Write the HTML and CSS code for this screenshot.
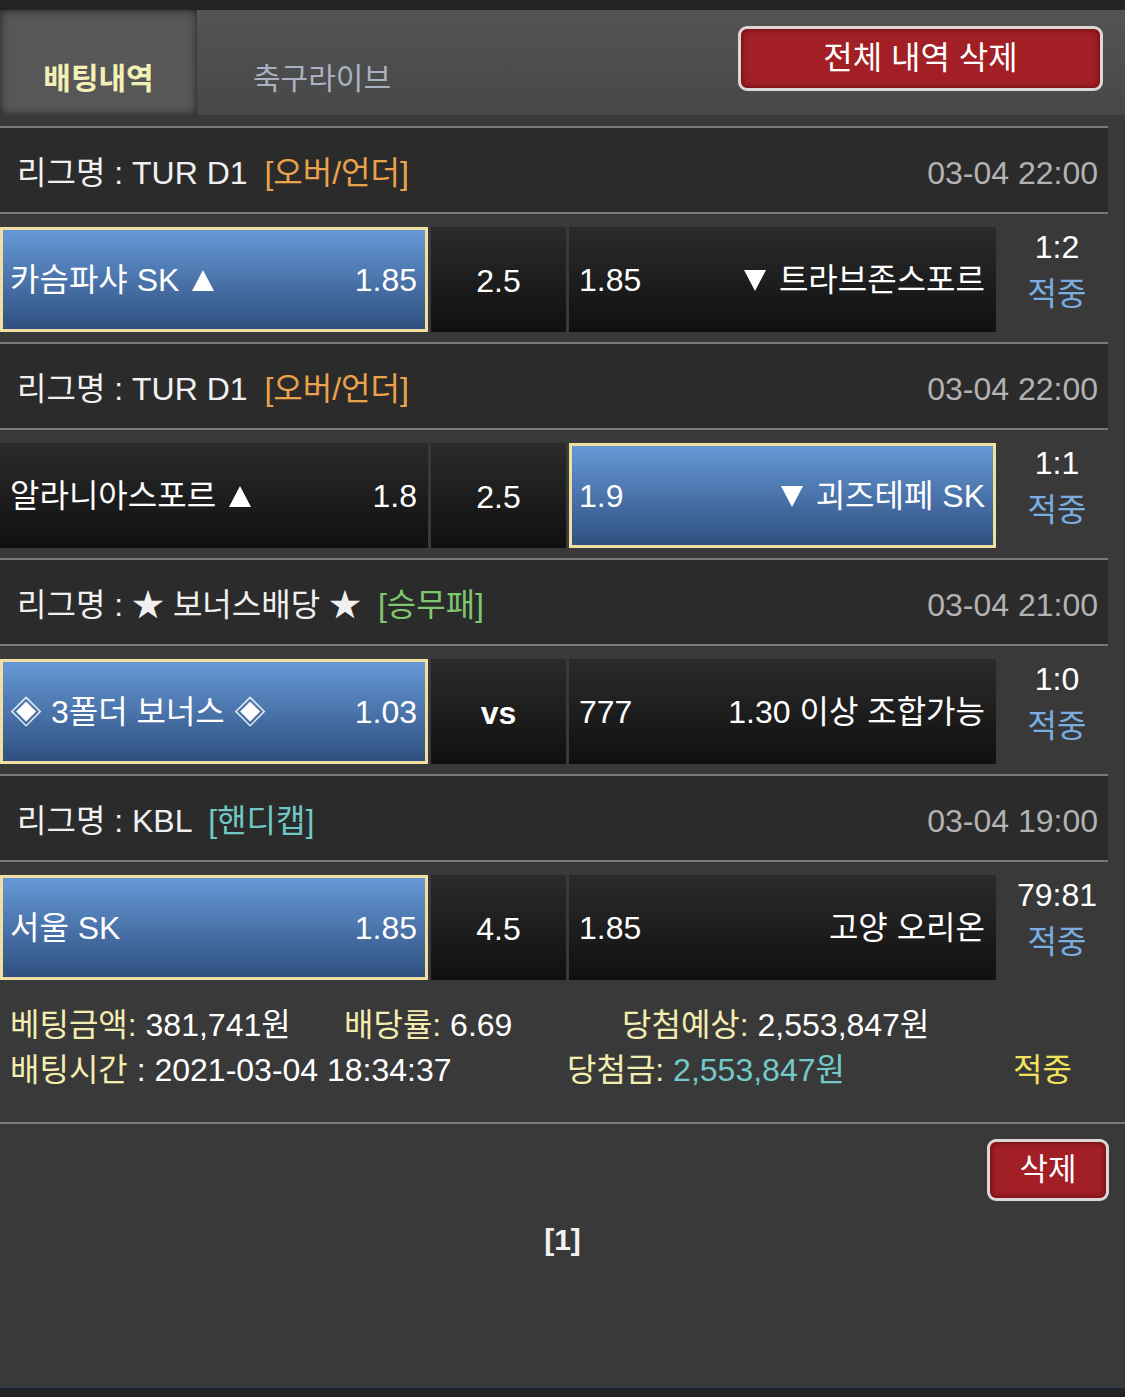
FILE: index.html
```html
<!DOCTYPE html>
<html lang="ko">
<head>
<meta charset="utf-8">
<title>배팅내역</title>
<link rel="stylesheet" href="styles.css">
</head>
<body>
<div class="topbar"></div>
<div class="tabs">
  <div class="tab tab-active">배팅내역</div>
  <div class="tab tab-live">축구라이브</div>
  <button class="btn btn-all">전체 내역 삭제</button>
</div>

<div class="list">
  <div class="block">
    <div class="league">
      <div class="league-name">리그명 : TUR D1 <span class="tag tag-ou">[오버/언더]</span></div>
      <div class="league-date">03-04 22:00</div>
    </div>
    <div class="row">
      <div class="cell cell-home sel"><span>카슴파샤 SK <svg class="tri tri-up" viewBox="0 0 22 21"><path d="M11 0L22 21H0z"/></svg></span><span>1.85</span></div>
      <div class="cell cell-mid">2.5</div>
      <div class="cell cell-away"><span>1.85</span><span><svg class="tri tri-down" viewBox="0 0 22 21"><path d="M0 0H22L11 21z"/></svg> 트라브존스포르</span></div>
      <div class="score"><div class="score-val">1:2</div><div class="score-res">적중</div></div>
    </div>
  </div>

  <div class="block">
    <div class="league">
      <div class="league-name">리그명 : TUR D1 <span class="tag tag-ou">[오버/언더]</span></div>
      <div class="league-date">03-04 22:00</div>
    </div>
    <div class="row">
      <div class="cell cell-home"><span>알라니아스포르 <svg class="tri tri-up" viewBox="0 0 22 21"><path d="M11 0L22 21H0z"/></svg></span><span>1.8</span></div>
      <div class="cell cell-mid">2.5</div>
      <div class="cell cell-away sel"><span>1.9</span><span><svg class="tri tri-down" viewBox="0 0 22 21"><path d="M0 0H22L11 21z"/></svg> 괴즈테페 SK</span></div>
      <div class="score"><div class="score-val">1:1</div><div class="score-res">적중</div></div>
    </div>
  </div>

  <div class="block">
    <div class="league">
      <div class="league-name">리그명 : ★ 보너스배당 ★ <span class="tag tag-wdl">[승무패]</span></div>
      <div class="league-date">03-04 21:00</div>
    </div>
    <div class="row">
      <div class="cell cell-home sel"><span>◈ 3폴더 보너스 ◈</span><span>1.03</span></div>
      <div class="cell cell-mid vs">vs</div>
      <div class="cell cell-away"><span>777</span><span>1.30 이상 조합가능</span></div>
      <div class="score"><div class="score-val">1:0</div><div class="score-res">적중</div></div>
    </div>
  </div>

  <div class="block">
    <div class="league">
      <div class="league-name">리그명 : KBL <span class="tag tag-hc">[핸디캡]</span></div>
      <div class="league-date">03-04 19:00</div>
    </div>
    <div class="row">
      <div class="cell cell-home sel"><span>서울 SK</span><span>1.85</span></div>
      <div class="cell cell-mid">4.5</div>
      <div class="cell cell-away"><span>1.85</span><span>고양 오리온</span></div>
      <div class="score"><div class="score-val">79:81</div><div class="score-res">적중</div></div>
    </div>
  </div>
</div>

<div class="summary">
  <div class="sum-line">
    <div class="sum-a"><span class="lbl">베팅금액:</span> 381,741원</div>
    <div class="sum-b"><span class="lbl">배당률:</span> 6.69</div>
    <div class="sum-c"><span class="lbl">당첨예상:</span> 2,553,847원</div>
  </div>
  <div class="sum-line">
    <div class="sum-d"><span class="lbl">배팅시간</span> : 2021-03-04 18:34:37</div>
    <div class="sum-e"><span class="lbl">당첨금:</span> <span class="win">2,553,847원</span></div>
    <div class="sum-f">적중</div>
  </div>
</div>

<div class="footer">
  <div class="footer-actions"><button class="btn btn-del">삭제</button></div>
  <div class="pager">[1]</div>
</div>
<div class="bottombar"></div>
</body>
</html>
```

FILE: styles.css
```css
* { box-sizing: border-box; }

body {
  margin: 0;
  background: #393939;
  color: #f2f2f2;
  font-family: "Liberation Sans", "Noto Sans CJK KR", sans-serif;
  font-size: 32px;
}

.topbar {
  height: 10px;
  background: #232323;
}

.tabs {
  display: flex;
  height: 105px;
  background: linear-gradient(#545454, #474747);
  margin-bottom: 11px;
}

.tab {
  font-size: 30px;
  padding-top: 49px;
  text-align: center;
  line-height: 40px;
}

.tab-active {
  width: 197px;
  background: #575757;
  box-shadow: inset 0 0 9px rgba(0, 0, 0, 0.65);
  color: #f3f0b6;
  font-weight: bold;
}

.tab-live {
  width: 248px;
  margin-left: 1px;
  color: #a9b1c2;
}

.btn {
  font-family: "Liberation Sans", "Noto Sans CJK KR", sans-serif;
  color: #ffffff;
  background: #a21f25;
  border: 3px solid #dcd6d6;
  border-radius: 9px;
  box-shadow: inset 0 0 6px rgba(60, 0, 0, 0.7);
  padding: 0;
}

.btn-all {
  margin-left: auto;
  margin-right: 22px;
  margin-top: 16px;
  width: 365px;
  height: 65px;
  font-size: 32px;
  line-height: 55px;
}

.list {
  width: 1108px;
}

.block {
  border-top: 2px solid #7a7a7a;
}

.league {
  height: 86px;
  background: #2b2b2b;
  border-bottom: 2px solid #7a7a7a;
  display: flex;
  align-items: center;
  justify-content: space-between;
  padding: 5px 10px 0 17px;
  line-height: 40px;
}

.league-name { color: #f0f0f0; }
.tag { margin-left: 8px; }
.tag-ou { color: #eca14c; }
.tag-wdl { color: #80c56f; }
.tag-hc { color: #70c8c5; }
.league-date { color: #b2b2b2; }

.row {
  height: 128px;
  padding-top: 13px;
  display: flex;
  gap: 3px;
}

.cell {
  height: 105px;
  background: linear-gradient(#2b2b2b, #101010);
  display: flex;
  align-items: center;
  justify-content: space-between;
  padding: 0 11px 0 10px;
  color: #ffffff;
  line-height: 40px;
}

.tri {
  width: 22px;
  height: 21px;
  fill: #ffffff;
  vertical-align: baseline;
}

.tri-up { margin-left: 4px; }
.tri-down { margin-right: 4px; }

.cell-home { width: 428px; }
.cell-mid { width: 135px; justify-content: center; padding: 2px 0 0; }
.cell-away { width: 427px; }
.vs { font-weight: bold; }

.cell.sel {
  background: linear-gradient(#6698d6, #2f5080);
  border: 3px solid #f1dfa2;
  padding: 0 8px 0 7px;
}

.score {
  width: 109px;
  margin-top: -3px;
  padding: 0 0 0 7px;
  text-align: center;
  line-height: 47px;
}

.score-val { color: #ffffff; }
.score-res { color: #79afe0; }

.summary {
  padding: 13px 0 29px 10px;
  border-bottom: 2px solid #7a7a7a;
  line-height: 45px;
  color: #ffffff;
}

.sum-line { display: flex; }
.lbl { color: #f3edb0; }
.sum-a { width: 334px; }
.sum-b { width: 278px; }
.sum-d { width: 557px; }
.sum-e { width: 446px; }
.win { color: #72cbc9; }
.sum-f { color: #f2e35c; }

.footer {
  height: 262px;
  padding-top: 15px;
}

.footer-actions {
  display: flex;
  justify-content: flex-end;
  padding-right: 16px;
}

.btn-del {
  width: 122px;
  height: 62px;
  font-size: 31px;
  line-height: 52px;
}

.pager {
  margin-top: 18px;
  text-align: center;
  font-weight: bold;
  font-size: 30px;
  line-height: 42px;
}

.bottombar {
  height: 11px;
  background: #232323;
  border-top: 2px solid #2f3b4a;
}
```
